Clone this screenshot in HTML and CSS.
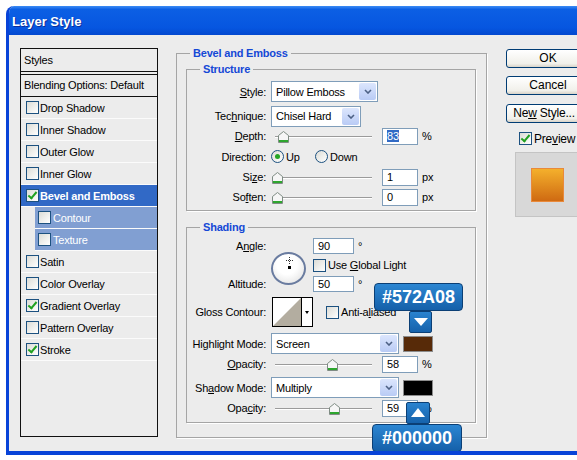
FILE: index.html
```html
<!DOCTYPE html>
<html lang="en">
<head>
    <meta charset="UTF-8">
    <title>Layer Style</title>
    <link rel="stylesheet" href="styles.css">
</head>
<body>
    <div class="window">
        <div class="titlebar">Layer Style</div>

        <div class="main">
            <div class="styles-list">
                <div class="list-head">Styles</div>
                <div class="list-blend">Blending Options: Default</div>
                <div class="list-item"><span class="check"></span>Drop Shadow</div>
                <div class="list-item"><span class="check"></span>Inner Shadow</div>
                <div class="list-item"><span class="check"></span>Outer Glow</div>
                <div class="list-item"><span class="check"></span>Inner Glow</div>
                <div class="list-item selected"><span class="check on"></span>Bevel and Emboss</div>
                <div class="list-item sub"><span class="check"></span>Contour</div>
                <div class="list-item sub"><span class="check"></span>Texture</div>
                <div class="list-item"><span class="check"></span>Satin</div>
                <div class="list-item"><span class="check"></span>Color Overlay</div>
                <div class="list-item"><span class="check on"></span>Gradient Overlay</div>
                <div class="list-item"><span class="check"></span>Pattern Overlay</div>
                <div class="list-item"><span class="check on"></span>Stroke</div>
            </div>

            <fieldset class="group outer">
                <legend>Bevel and Emboss</legend>
                <div class="group-body">
                    <fieldset class="group structure">
                        <legend>Structure</legend>
                        <div class="form">
                            <div class="row r-style">
                                <span class="label"><u>S</u>tyle:</span>
                                <div class="select w-style"><span>Pillow Emboss</span><span class="drop"><svg width="8" height="5"><polyline points="1,1 4,4 7,1" fill="none" stroke="#4d6185" stroke-width="1.6"/></svg></span></div>
                            </div>
                            <div class="row r-tech">
                                <span class="label">Tec<u>h</u>nique:</span>
                                <div class="select w-tech"><span>Chisel Hard</span><span class="drop"><svg width="8" height="5"><polyline points="1,1 4,4 7,1" fill="none" stroke="#4d6185" stroke-width="1.6"/></svg></span></div>
                            </div>
                            <div class="row">
                                <span class="label"><u>D</u>epth:</span>
                                <div class="slider"><svg class="thumb" style="left:7px" width="11" height="12"><polygon points="0.5,4.5 5.5,0.5 10.5,4.5 10.5,11.5 0.5,11.5" fill="#f6f6f6" stroke="#7f8c84"/><rect x="1" y="9" width="9" height="2" fill="#2ea62e"/></svg></div>
                                <div class="field"><span class="hl">83</span></div>
                                <span class="unit">%</span>
                            </div>
                            <div class="row r-dir">
                                <span class="label">Direction:</span>
                                <span class="option"><span class="radio on"></span>Up</span>
                                <span class="option"><span class="radio"></span>Down</span>
                            </div>
                            <div class="row">
                                <span class="label">Si<u>z</u>e:</span>
                                <div class="slider"><svg class="thumb" style="left:1px" width="11" height="12"><polygon points="0.5,4.5 5.5,0.5 10.5,4.5 10.5,11.5 0.5,11.5" fill="#f6f6f6" stroke="#7f8c84"/><rect x="1" y="9" width="9" height="2" fill="#2ea62e"/></svg></div>
                                <div class="field">1</div>
                                <span class="unit">px</span>
                            </div>
                            <div class="row">
                                <span class="label">So<u>f</u>ten:</span>
                                <div class="slider"><svg class="thumb" style="left:1px" width="11" height="12"><polygon points="0.5,4.5 5.5,0.5 10.5,4.5 10.5,11.5 0.5,11.5" fill="#f6f6f6" stroke="#7f8c84"/><rect x="1" y="9" width="9" height="2" fill="#2ea62e"/></svg></div>
                                <div class="field">0</div>
                                <span class="unit">px</span>
                            </div>
                        </div>
                    </fieldset>

                    <fieldset class="group shading">
                        <legend>Shading</legend>
                        <div class="form">
                            <div class="angle-block">
                                <div class="angle-labels">
                                    <span class="label">A<u>n</u>gle:</span>
                                    <span class="label">Altitude:</span>
                                </div>
                                <div class="dial">
                                    <svg width="31" height="29">
                                        <line x1="13" y1="6.5" x2="20" y2="6.5" stroke="#333" stroke-width="1" stroke-dasharray="1,1"/>
                                        <line x1="16.5" y1="3" x2="16.5" y2="10" stroke="#333" stroke-width="1" stroke-dasharray="1,1"/>
                                        <rect x="15" y="12" width="3" height="3" fill="#000"/>
                                    </svg>
                                </div>
                                <div class="angle-fields">
                                    <div class="mini-row"><div class="field narrow">90</div><span class="unit">°</span></div>
                                    <div class="mini-row"><span class="check"></span><span>Use <u>G</u>lobal Light</span></div>
                                    <div class="mini-row"><div class="field narrow">50</div><span class="unit">°</span></div>
                                </div>
                            </div>
                            <div class="row r-gloss">
                                <span class="label">Gloss Contour:</span>
                                <div class="contour">
                                    <div class="contour-thumb"><svg width="28" height="28"><polygon points="0,28 28,0 28,28" fill="#b3ada0"/></svg></div>
                                    <div class="contour-arrow"></div>
                                </div>
                                <span class="check aa"></span><span>Anti-a<u>l</u>iased</span>
                            </div>
                            <div class="row r-mode">
                                <span class="label">Hi<u>g</u>hlight Mode:</span>
                                <div class="select w-mode"><span>Screen</span><span class="drop"><svg width="8" height="5"><polyline points="1,1 4,4 7,1" fill="none" stroke="#4d6185" stroke-width="1.6"/></svg></span></div>
                                <span class="swatch brown"></span>
                            </div>
                            <div class="row">
                                <span class="label"><u>O</u>pacity:</span>
                                <div class="slider"><svg class="thumb" style="left:56px" width="11" height="12"><polygon points="0.5,4.5 5.5,0.5 10.5,4.5 10.5,11.5 0.5,11.5" fill="#f6f6f6" stroke="#7f8c84"/><rect x="1" y="9" width="9" height="2" fill="#2ea62e"/></svg></div>
                                <div class="field">58</div>
                                <span class="unit">%</span>
                            </div>
                            <div class="row r-mode r-shadow">
                                <span class="label">Sh<u>a</u>dow Mode:</span>
                                <div class="select w-mode"><span>Multiply</span><span class="drop"><svg width="8" height="5"><polyline points="1,1 4,4 7,1" fill="none" stroke="#4d6185" stroke-width="1.6"/></svg></span></div>
                                <span class="swatch black"></span>
                            </div>
                            <div class="row">
                                <span class="label">Opa<u>c</u>ity:</span>
                                <div class="slider"><svg class="thumb" style="left:58px" width="11" height="12"><polygon points="0.5,4.5 5.5,0.5 10.5,4.5 10.5,11.5 0.5,11.5" fill="#f6f6f6" stroke="#7f8c84"/><rect x="1" y="9" width="9" height="2" fill="#2ea62e"/></svg></div>
                                <div class="field">59</div>
                                <span class="unit">%</span>
                            </div>
                        </div>
                    </fieldset>
                </div>
            </fieldset>

            <div class="side">
                <div class="btn first">OK</div>
                <div class="btn second">Cancel</div>
                <div class="btn new">Ne<u>w</u> Style...</div>
                <div class="preview-check"><span class="check on"></span><span>Pre<u>v</u>iew</span></div>
                <div class="preview">
                    <div class="swatch-preview"></div>
                </div>
            </div>
        </div>

        <div class="pointer down p-top"></div>
        <div class="badge b-top">#572A08</div>
        <div class="pointer up p-bottom"></div>
        <div class="badge b-bottom">#000000</div>
    </div>
</body>
</html>
```

FILE: styles.css
```css
* {
    box-sizing: border-box;
}

body {
    margin: 0;
    background: #fff;
    overflow: hidden;
    font-family: "Liberation Sans", Arial, sans-serif;
    font-size: 11px;
    letter-spacing: -0.2px;
    color: #000;
}

.window {
    position: relative;
    margin: 6px 0 0 6px;
    width: 640px;
    height: 449px;
    border-left: 3px solid #0843d8;
    border-bottom: 4px solid #0843d8;
    border-top-left-radius: 8px;
    background: #ececec;
    overflow: hidden;
}

.titlebar {
    height: 29px;
    padding: 3px 0 0 3px;
    line-height: 26px;
    font-size: 13px;
    font-weight: bold;
    letter-spacing: 0;
    color: #fff;
    text-shadow: 1px 1px 0 #0b2f9c;
    background: linear-gradient(#3b8cf5 0, #0c5fe4 12%, #0656e0 75%, #0348cf 100%);
}

.main {
    display: flex;
    align-items: flex-start;
    padding: 13px 0 0 11px;
}

/* styles list */

.styles-list {
    width: 138px;
    height: 389px;
    border: 1px solid #111;
    flex-shrink: 0;
}

.list-head {
    height: 23px;
    line-height: 22px;
    padding-left: 3px;
    border-bottom: 1px solid #111;
}

.list-blend {
    height: 23px;
    line-height: 21px;
    margin-top: 2px;
    padding-left: 3px;
    border-top: 1px solid #111;
    border-bottom: 1px solid #111;
}

.list-item {
    display: flex;
    align-items: center;
    height: 22px;
    padding-left: 5px;
    border-bottom: 1px solid #fbfbfb;
}

.list-item .check {
    margin-right: 1px;
}

.list-item.selected {
    background: #3169c6;
    color: #fff;
    font-weight: bold;
}

.list-item.sub {
    margin-left: 14px;
    padding-left: 3px;
    background: #819fd2;
    color: #fff;
}

.list-item.sub .check {
    margin-right: 2px;
}

.check {
    position: relative;
    display: inline-block;
    width: 13px;
    height: 13px;
    flex-shrink: 0;
    border: 1px solid #1c5180;
    background: linear-gradient(135deg, #dcdcd6, #fff);
}

.check.on::after {
    content: '';
    position: absolute;
    left: 3px;
    top: 0;
    width: 3px;
    height: 7px;
    border: solid #21a121;
    border-width: 0 2px 2px 0;
    transform: rotate(40deg);
}

/* group boxes */

.group {
    margin: 0;
    padding: 0;
    min-width: 0;
    border: 1px solid #a5a5a5;
    box-shadow: 1px 1px 0 #fff;
}

.group legend {
    margin-left: 13px;
    padding: 0 3px;
    line-height: 13px;
    font-weight: bold;
    color: #1448d6;
}

.outer {
    width: 311px;
    height: 391px;
    margin: -1px 0 0 18px;
    flex-shrink: 0;
}

.group-body {
    padding: 3px 10px 0 9px;
}

.shading {
    margin-top: 10px;
}

.structure .form {
    padding: 5px 0 3px;
}

.shading .form {
    padding: 4px 0 4px;
}

.row {
    display: flex;
    align-items: center;
    height: 20px;
}

.label {
    width: 79px;
    margin-right: 5px;
    text-align: right;
    flex-shrink: 0;
}

.r-style {
    height: 21px;
}

.r-tech {
    margin-top: 4px;
}

.r-dir {
    height: 21px;
}

.select {
    display: flex;
    align-items: center;
    justify-content: space-between;
    height: 21px;
    padding: 1px 1px 1px 4px;
    background: #fff;
    border: 1px solid #7f9db9;
}

.select .drop {
    display: flex;
    align-items: center;
    justify-content: center;
    width: 17px;
    height: 17px;
    border-radius: 2px;
    background: linear-gradient(#dce6fd, #b9cbf5);
}

.w-style {
    width: 107px;
}

.w-tech {
    width: 90px;
}

.w-mode {
    width: 128px;
}

.slider {
    position: relative;
    width: 105px;
    height: 20px;
}

.slider::before {
    content: '';
    position: absolute;
    left: 4px;
    right: 4px;
    top: 10px;
    height: 1px;
    background: #9b9b9b;
    box-shadow: 0 1px 0 #fff;
}

.thumb {
    position: absolute;
    top: 5px;
}

.field {
    width: 36px;
    height: 17px;
    margin-left: 6px;
    padding-left: 4px;
    line-height: 15px;
    background: #fff;
    border: 1px solid #7f9db9;
}

.field .hl {
    background: #316ac5;
    color: #fff;
}

.unit {
    margin-left: 4px;
}

.option {
    display: flex;
    align-items: center;
    width: 44px;
}

.radio {
    position: relative;
    width: 13px;
    height: 13px;
    margin-right: 2px;
    border-radius: 50%;
    border: 1px solid #1c5180;
    background: linear-gradient(135deg, #dcdcd6, #fff);
}

.radio.on::after {
    content: '';
    position: absolute;
    left: 3px;
    top: 3px;
    width: 5px;
    height: 5px;
    border-radius: 50%;
    background: #24a524;
}

/* angle */

.angle-block {
    display: flex;
    height: 54px;
}

.angle-labels {
    display: flex;
    flex-direction: column;
    justify-content: space-between;
}

.angle-labels .label {
    height: 16px;
    line-height: 16px;
}

.dial {
    width: 35px;
    height: 33px;
    margin: 14px 7px 0 0;
    border-radius: 50%;
    border: 2px solid #6a7ca0;
    background: radial-gradient(circle at 45% 35%, #fff 40%, #dcdcdc);
}

.dial svg {
    display: block;
}

.angle-fields {
    display: flex;
    flex-direction: column;
    gap: 3px;
}

.mini-row {
    display: flex;
    align-items: center;
    height: 16px;
}

.mini-row .check {
    margin-right: 2px;
}

.field.narrow {
    width: 41px;
    height: 16px;
    margin-left: 0;
    line-height: 14px;
}

/* gloss contour */

.r-gloss {
    height: 30px;
    margin-top: 5px;
}

.r-gloss .label {
    margin-right: 6px;
}

.contour {
    display: flex;
    width: 41px;
    height: 30px;
    border: 1px solid #000;
    background: #fff;
}

.contour-thumb {
    width: 29px;
    border-right: 1px solid #000;
}

.contour-thumb svg {
    display: block;
}

.contour-arrow {
    position: relative;
    flex: 1;
}

.contour-arrow::after {
    content: '';
    position: absolute;
    left: 3px;
    top: 13px;
    border-left: 2.5px solid transparent;
    border-right: 2.5px solid transparent;
    border-top: 3px solid #000;
}

.check.aa {
    margin: 0 2px 0 13px;
}

.r-mode {
    height: 21px;
    margin-top: 6px;
}

.r-shadow {
    margin-top: 3px;
}

.swatch {
    width: 30px;
    height: 16px;
    margin-left: 4px;
    border: 1px solid #8c8c8c;
}

.swatch.brown {
    background: #572a08;
}

.swatch.black {
    background: #000;
}

/* right column */

.side {
    width: 84px;
    margin: 1px 0 0 19px;
    flex-shrink: 0;
}

.btn {
    height: 19px;
    margin-bottom: 9px;
    line-height: 17px;
    text-align: center;
    font-size: 12px;
    letter-spacing: 0;
    border: 1px solid #003c74;
    border-radius: 3px;
    background: linear-gradient(#fff, #f1f0ea 80%, #d8d3c8);
}

.btn.first {
    margin-bottom: 8px;
}

.btn.new {
    padding-right: 8px;
    letter-spacing: -0.2px;
}

.preview-check {
    display: flex;
    align-items: center;
    height: 13px;
    padding-left: 13px;
    font-size: 12px;
    letter-spacing: -0.2px;
}

.preview-check .check {
    margin-right: 2px;
}

.preview {
    width: 80px;
    height: 65px;
    margin: 7px 0 0 9px;
    padding: 15px 0 0 15px;
    background: #d8d8d8;
    border: 1px solid #c4c4c4;
}

.swatch-preview {
    width: 33px;
    height: 34px;
    border: 1px solid #e9893a;
    background: linear-gradient(#f4b02c, #cf6a12);
}

/* callouts */

.badge {
    position: absolute;
    height: 28px;
    line-height: 26px;
    text-align: center;
    font-size: 18px;
    font-weight: bold;
    letter-spacing: 0;
    color: #fff;
    border: 1px solid #0b3f75;
    border-radius: 4px;
    background: linear-gradient(#2c86d2, #1560a9);
}

.b-top {
    left: 365px;
    top: 277px;
    width: 89px;
}

.b-bottom {
    left: 363px;
    top: 418px;
    width: 90px;
}

.pointer {
    position: absolute;
    width: 24px;
    height: 22px;
    border: 1px solid #0b3f75;
    border-radius: 2px;
    background: linear-gradient(#2a83cf, #1662ab);
}

.pointer::after {
    content: '';
    position: absolute;
    left: 4px;
    border-left: 7px solid transparent;
    border-right: 7px solid transparent;
}

.pointer.down::after {
    top: 6px;
    border-top: 8px solid #fff;
}

.pointer.up::after {
    top: 5px;
    border-bottom: 9px solid #fff;
}

.p-top {
    left: 400px;
    top: 305px;
    width: 23px;
}

.p-bottom {
    left: 397px;
    top: 396px;
}
```
